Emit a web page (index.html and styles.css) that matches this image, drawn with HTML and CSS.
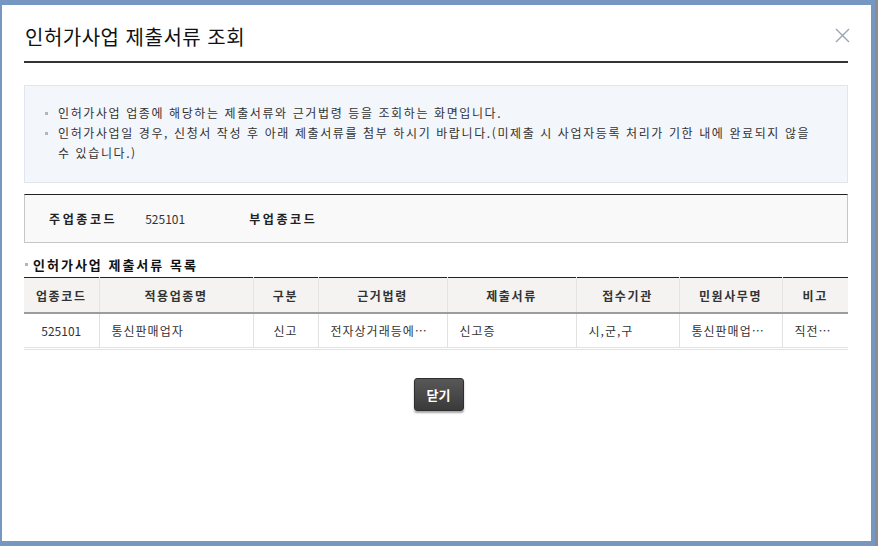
FILE: index.html
```html
<!DOCTYPE html>
<html lang="ko">
<head>
    <meta charset="UTF-8">
    <meta name="viewport" content="width=device-width, initial-scale=1.0">
    <title>인허가사업 제출서류 조회</title>
    <link rel="stylesheet" href="styles.css">
</head>
<body>
    <div class="popup">
        <div class="popup-head">
            <h1 class="popup-title">인허가사업 제출서류 조회</h1>
            <button class="btn-close" type="button" aria-label="닫기">
                <svg width="15" height="15" viewBox="0 0 15 15">
                    <path d="M1 1 L14 14 M14 1 L1 14" stroke="#9aa2b4" stroke-width="1.4" fill="none"/>
                </svg>
            </button>
        </div>

        <div class="guide-box">
            <ul class="guide-list">
                <li>인허가사업 업종에 해당하는 제출서류와 근거법령 등을 조회하는 화면입니다.</li>
                <li>인허가사업일 경우, 신청서 작성 후 아래 제출서류를 첨부 하시기 바랍니다.(미제출 시 사업자등록 처리가 기한 내에 완료되지 않을 수 있습니다.)</li>
            </ul>
        </div>

        <div class="search-box">
            <span class="label">주업종코드</span>
            <span class="value">525101</span>
            <span class="label">부업종코드</span>
        </div>

        <h2 class="sub-title">인허가사업 제출서류 목록</h2>
        <div class="tbl-wrap">
            <table class="tbl">
                <colgroup>
                    <col style="width:75px">
                    <col style="width:154px">
                    <col style="width:65px">
                    <col style="width:129px">
                    <col style="width:129px">
                    <col style="width:103px">
                    <col style="width:103px">
                    <col>
                </colgroup>
                <thead>
                    <tr>
                        <th>업종코드</th>
                        <th>적용업종명</th>
                        <th>구분</th>
                        <th>근거법령</th>
                        <th>제출서류</th>
                        <th>접수기관</th>
                        <th>민원사무명</th>
                        <th>비고</th>
                    </tr>
                </thead>
                <tbody>
                    <tr>
                        <td class="center num">525101</td>
                        <td>통신판매업자</td>
                        <td class="center">신고</td>
                        <td title="전자상거래등에서의 소비자보호에 관한 법률">전자상거래등에…</td>
                        <td>신고증</td>
                        <td>시,군,구</td>
                        <td title="통신판매업 신고">통신판매업…</td>
                        <td title="직전 연도 거래횟수">직전…</td>
                    </tr>
                </tbody>
            </table>
        </div>

        <div class="btn-area">
            <button class="btn-dark" type="button">닫기</button>
        </div>
    </div>
</body>
</html>
```

FILE: styles.css
```css
html, body {
    margin: 0;
    padding: 0;
}
body {
    width: 878px;
    height: 546px;
    box-sizing: border-box;
    padding: 5px 4px 5px 2px;
    background: #7597c1;
    border-right: 3px solid #8c8c8c;
    overflow: hidden;
    font-family: "Noto Sans CJK KR", "Noto Sans", sans-serif;
    color: #333;
}
.popup {
    height: 536px;
    box-sizing: border-box;
    padding: 0 23px 0 22px;
    background: #fff;
}
.popup-head {
    display: flex;
    justify-content: space-between;
    align-items: flex-start;
    padding: 20px 0 12px 1px;
    border-bottom: 2px solid #333;
}
.popup-title {
    margin: 0;
    font-size: 20px;
    line-height: 24px;
    letter-spacing: 0.5px;
    font-weight: normal;
    color: #111;
}
.btn-close {
    margin: 3px -2px 0 0;
    padding: 0;
    width: 15px;
    height: 15px;
    border: none;
    background: none;
    cursor: pointer;
}
.btn-close svg {
    display: block;
}
.guide-box {
    margin-top: 22px;
    padding: 17px 29px 19px 20px;
    background: #f3f6fb;
    border: 1px solid #dfe6ef;
}
.guide-list {
    margin: 0;
    padding: 0;
    list-style: none;
}
.guide-list li {
    position: relative;
    padding-left: 13px;
    font-size: 12px;
    line-height: 20px;
    letter-spacing: 1.6px;
    color: #333;
}
.guide-list li::before {
    content: "";
    position: absolute;
    left: 0;
    top: 9px;
    width: 3px;
    height: 3px;
    background: #b5b5b5;
}
.search-box {
    display: flex;
    align-items: center;
    height: 47px;
    margin-top: 11px;
    padding-left: 24px;
    background: #f9f9f9;
    border: 1px solid #c6c6c6;
    border-top: 1px solid #222;
    font-size: 12px;
}
.search-box .label {
    font-weight: bold;
    letter-spacing: 2.6px;
    color: #222;
}
.search-box .value {
    width: 104px;
    padding-left: 28px;
    color: #333;
}
.sub-title {
    position: relative;
    margin: 13px 0 4px;
    padding-left: 9px;
    font-size: 13px;
    line-height: 17px;
    letter-spacing: 2px;
    color: #111;
}
.sub-title::before {
    content: "";
    position: absolute;
    left: 1px;
    top: 7px;
    width: 3px;
    height: 3px;
    background: #b5b5b5;
}
.tbl-wrap {
    padding-bottom: 1px;
    border-bottom: 1px solid #e2e2e2;
}
.tbl {
    width: 100%;
    table-layout: fixed;
    border-collapse: collapse;
    border-top: 1px solid #222;
    font-size: 12px;
}
.tbl th {
    height: 34px;
    padding: 0;
    background: #f4f3f1;
    border-left: 1px solid #e6e4e0;
    border-bottom: 2px solid #9c9c9c;
    font-weight: bold;
    letter-spacing: 1.6px;
    color: #333;
}
.tbl td {
    height: 33px;
    padding: 0 6px 0 12px;
    border-left: 1px solid #e2e2e2;
    border-bottom: 1px solid #e2e2e2;
    white-space: nowrap;
    overflow: hidden;
    letter-spacing: 1px;
    color: #333;
}
.tbl th:first-child,
.tbl td:first-child {
    border-left: none;
}
.tbl td.center {
    text-align: center;
    padding: 0 4px;
}
.tbl td.num {
    letter-spacing: 0;
}
.btn-area {
    margin-top: 28px;
    text-align: center;
}
.btn-dark {
    width: 50px;
    height: 33px;
    margin-left: 5px;
    padding: 0;
    border: 1px solid #2e2e2e;
    border-radius: 3px;
    background: linear-gradient(#585858, #3a3a3a);
    box-shadow: 0 2px 2px rgba(0, 0, 0, 0.35);
    font-family: "Noto Sans CJK KR", sans-serif;
    font-size: 13px;
    font-weight: bold;
    color: #fff;
    cursor: pointer;
}
```
